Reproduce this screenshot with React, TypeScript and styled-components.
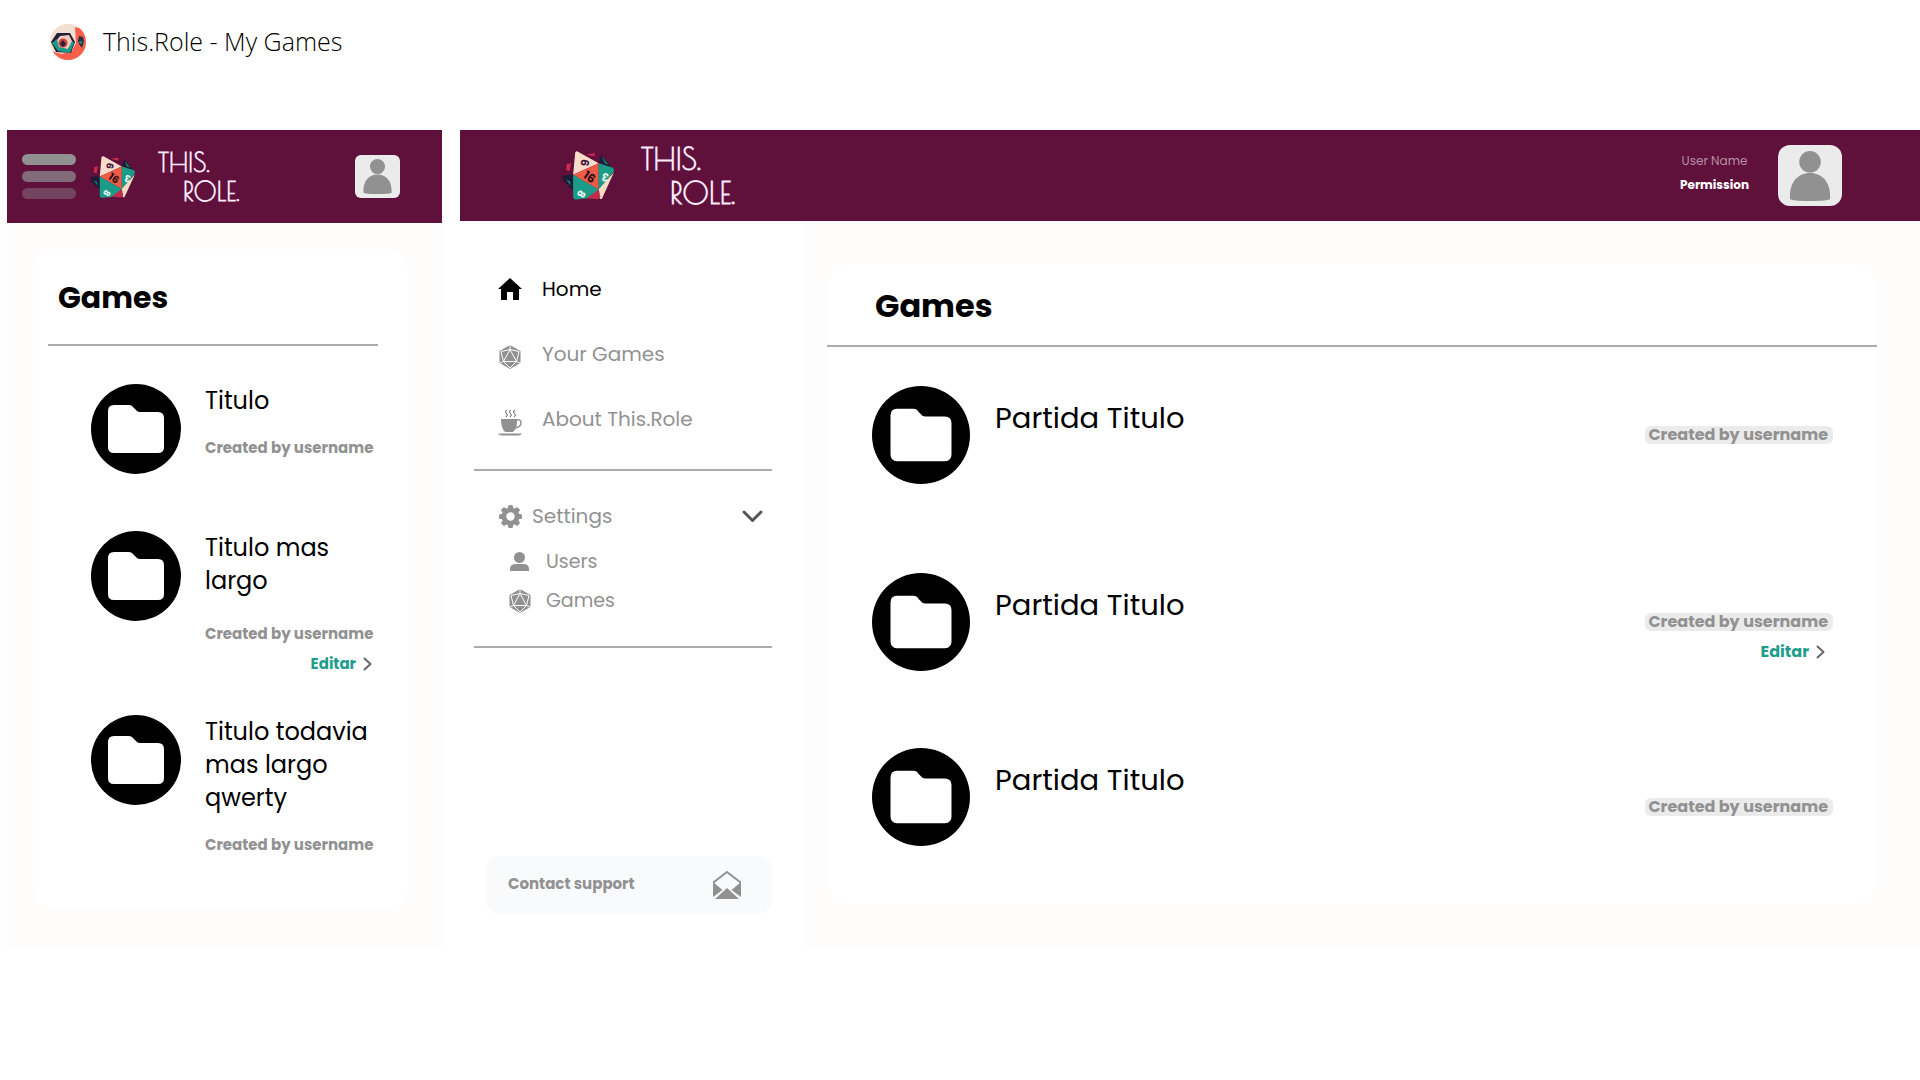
import React from "react";
import styled, { createGlobalStyle, css } from "styled-components";

const ink = "#000000";
const grey = "#919191";
const wine = "#5f113c";
const teal = "#1f9d8b";

const Global = createGlobalStyle`
  *, *::before, *::after { box-sizing: border-box; }
  body { margin: 0; background: #fff; color: ${ink}; font-family: Poppins, Inter, "Noto Sans", sans-serif; }
  h1, h2, h3, p, ul { margin: 0; padding: 0; }
  ul { list-style: none; }
  a { color: inherit; text-decoration: none; }
  button { border: 0; padding: 0; background: none; color: inherit; font: inherit; cursor: pointer; }
  svg { display: block; flex: none; }
`;

/* ---------- layout ---------- */

const TitleBar = styled.header`
  display: flex;
  align-items: flex-start;
  gap: 17px;
  height: 130px;
  padding: 24px 50px 0;
`;

const PageTitle = styled.h1`
  font: 300 25px/34px "Open Sans", "Noto Sans", sans-serif;
`;

const Boards = styled.main`
  display: flex;
  gap: 18px;
  padding-left: 7px;
`;

const Phone = styled.section`
  flex: 0 0 435px;
  min-width: 0;
  display: flex;
  flex-direction: column;
  background: #fffdfc;
`;

const Desktop = styled.section`
  flex: 1;
  min-width: 0;
  display: flex;
  flex-direction: column;
`;

const TopBar = styled.div<{ $wide?: boolean }>`
  display: flex;
  align-items: center;
  color: #fff;
  background: ${wine};
  ${(p) =>
    p.$wide
      ? css`height: 91px; padding: 0 78px 0 101px;`
      : css`height: 93px; padding: 0 42px 0 15px;`}
`;

const MenuButton = styled.button`
  display: grid;
  gap: 6px;
  width: 54px;
  margin-right: 13px;
`;

const Bar = styled.span<{ $fade: number }>`
  height: 11px;
  border-radius: 6px;
  background: ${grey};
  opacity: ${(p) => p.$fade};
`;

const Brand = styled.a<{ $wide?: boolean }>`
  display: flex;
  align-items: center;
  gap: ${(p) => (p.$wide ? 25 : 21)}px;
  margin-right: auto;
  color: #fbe9fb;
  font-family: "Poiret One", "Josefin Sans", Lato, sans-serif;
  font-weight: 700;
  font-size: ${(p) => (p.$wide ? 30 : 26)}px;
  line-height: ${(p) => (p.$wide ? 34 : 29)}px;
`;

const BrandWords = styled.span`
  display: grid;
`;

const BrandSecond = styled.span<{ $wide?: boolean }>`
  padding-left: ${(p) => (p.$wide ? 29 : 25)}px;
`;

const Account = styled.div`
  display: grid;
  gap: 4px;
  margin-right: 29px;
  padding-bottom: 6px;
  text-align: center;
  font-size: 12px;
  line-height: 20px;
`;

const UserName = styled.span`
  color: #b78fa6;
`;

const Permission = styled.strong`
  font-weight: 700;
`;

const Avatar = styled.button<{ $wide?: boolean }>`
  display: grid;
  place-items: center;
  background: #ebebeb;
  ${(p) =>
    p.$wide
      ? css`width: 64px; height: 61px; border-radius: 12px;`
      : css`width: 45px; height: 43px; border-radius: 6px;`}
`;

const Columns = styled.div`
  flex: 1;
  display: flex;
`;

const Sidebar = styled.aside`
  flex: 0 0 342px;
  display: flex;
  flex-direction: column;
  padding: 50px 30px 36px 14px;
`;

const Content = styled.div`
  flex: 1;
  min-width: 0;
  padding: 43px 43px 45px 25px;
  background: #fffdfc;
`;

const PhoneContent = styled.div`
  padding: 26px 34px 40px 26px;
`;

/* ---------- sidebar ---------- */

const Divider = styled.hr`
  width: 100%;
  height: 2px;
  margin: 0;
  border: 0;
  background: #ababab;
`;

const NavList = styled.ul`
  display: grid;
  gap: 29px;
  padding: 0 0 32px 24px;
`;

const NavLink = styled.a<{ $active?: boolean }>`
  display: grid;
  grid-template-columns: 24px 1fr;
  align-items: center;
  gap: 20px;
  height: 36px;
  font-size: 20px;
  line-height: 24px;
  color: ${(p) => (p.$active ? ink : grey)};

  svg {
    justify-self: center;
    margin-top: ${(p) => (p.$active ? 0 : 6)}px;
  }
`;

const SettingsButton = styled.button`
  display: flex;
  align-items: center;
  gap: 10px;
  width: 100%;
  height: 36px;
  margin-top: 27px;
  padding: 0 9px 0 25px;
  color: ${grey};
  font-size: 20px;
  line-height: 24px;
`;

const SettingsLabel = styled.span`
  margin-right: auto;
`;

const SubList = styled.ul`
  padding: 8px 0 26px 35px;
`;

const SubLink = styled.a`
  display: grid;
  grid-template-columns: 22px 1fr;
  align-items: center;
  justify-items: start;
  gap: 15px;
  height: 39px;
  color: ${grey};
  font-size: 19px;
  line-height: 24px;
`;

const Support = styled.a`
  display: flex;
  align-items: center;
  justify-content: space-between;
  height: 58px;
  margin: auto 0 0 12px;
  padding: 0 31px 0 22px;
  border-radius: 14px;
  background: #f9fafc;
  color: ${grey};
  font-size: 15px;
  font-weight: 700;
`;

const SupportLabel = styled.span`
  padding-bottom: 4px;
`;

/* ---------- game cards ---------- */

const Card = styled.section<{ $wide?: boolean }>`
  background: #fff;
  border-radius: 24px;
  ${(p) =>
    p.$wide
      ? css`padding: 20px 0 58px;`
      : css`padding: 27px 30px 55px 15px;`}
`;

const CardTitle = styled.h2<{ $wide?: boolean }>`
  font-weight: 700;
  line-height: 44px;
  ${(p) =>
    p.$wide
      ? css`padding: 0 48px 17px; font-size: 32px;`
      : css`padding: 0 10px 24px; font-size: 30px;`}
`;

const PhoneList = styled.ul`
  display: grid;
  gap: 41px;
  padding: 38px 0 0 43px;
`;

const PhoneItem = styled.li`
  display: grid;
  grid-template-columns: 90px 1fr;
  align-items: start;
  gap: 24px;
  min-height: 106px;

  &:last-child { min-height: 0; }
`;

const PhoneName = styled.h3`
  font-size: 24px;
  font-weight: 400;
  line-height: 33px;
`;

const PhoneMeta = styled.div<{ $editable?: boolean }>`
  display: grid;
  gap: 10px;
  padding-top: ${(p) => (p.$editable ? 27 : 21)}px;
  color: ${grey};
  font-size: 15px;
  font-weight: 700;
  line-height: 20px;
  white-space: nowrap;
`;

const EditLink = styled.a`
  display: flex;
  align-items: center;
  justify-content: flex-end;
  gap: 7px;
  padding-right: 6px;
  color: ${teal};
  font-weight: 700;
  line-height: 20px;
`;

const WideList = styled.ul`
  display: grid;
  gap: 77px;
  padding: 39px 44px 0 45px;
`;

const WideMeta = styled.div`
  display: grid;
  align-content: start;
  gap: 11px;
  padding-top: 40px;
  font-size: 16px;
`;

const WideItem = styled.li`
  display: grid;
  grid-template-columns: 98px 1fr auto;
  gap: 25px;

  &:first-child { margin-bottom: 12px; }
  &:last-child ${WideMeta} { padding-top: 50px; }
`;

const WideName = styled.h3`
  padding-top: 12px;
  font-size: 29px;
  font-weight: 400;
  line-height: 40px;
`;

const Badge = styled.p`
  padding: 0 5px 0 3px;
  border-radius: 6px;
  background: #ebebeb;
  color: ${grey};
  font-weight: 700;
  line-height: 18px;
`;

const WideEdit = styled(EditLink)`
  padding-right: 8px;
`;

/* ---------- drawings ---------- */

const Dice = ({ width, height }: { width: number; height: number }) => (
  <svg width={width} height={height} viewBox="36 34 156 146" aria-hidden="true">
    <path d="M72 104 38 108 42 122 72 152zM144 70 151 47 183 86z" fill="#1d1b35" />
    <path d="M152 52 160 72 172 76zM50 118 62 124 62 136z" fill="#17786f" />
    <path d="M52 74 64 72 60 94 50 92zM108 46 132 43 132 52 118 50z" fill="#d0284f" />
    <path d="M187 98 152 174Q147 176 145 170L141 147z" fill="#f9dcc3" />
    <path d="M104 172 143 145 148 168 140 175z" fill="#c22c4c" />
    <path d="M70 105 76 41Q79 36 84 39L143 72z" fill="#fadcc8" />
    <path d="M143 72 70 105 143 147z" fill="#f15b45" />
    <path d="M143 72 182 84Q189 88 186 96L143 147z" fill="#1b9c88" />
    <path d="M70 105 143 147 108 173 78 176Q70 176 70 168z" fill="#1b9c88" />
    <g fontFamily="Poppins, Inter, sans-serif" fontWeight="700" textAnchor="middle">
      <text transform="translate(92 68) rotate(100)" fontSize="32" fill="#43163d">6</text>
      <text transform="translate(110 121) rotate(35)" fontSize="34" fill="#2b1018">16</text>
      <text transform="translate(165 101) rotate(195)" fontSize="32" fill="#e6f6ef">3</text>
      <text transform="translate(84 155) rotate(-240)" fontSize="30" fill="#e6f6ef">8</text>
    </g>
  </svg>
);

const SiteIcon = () => (
  <svg width="36" height="36" viewBox="0 0 36 36" aria-hidden="true">
    <clipPath id="round"><circle cx="18" cy="18" r="18" /></clipPath>
    <g clipPath="url(#round)">
      <path d="M0 0h36v36H0z" fill="#f3dfcf" />
      <path d="M25 3l11 3v30H0v-9l12 3 10-3 4-8z" fill="#f9604c" />
      <path d="M1 18 7 9l13 0 5 9-4 11-15-1z" fill="#21213a" />
      <path d="m10 12 9-1 4 8-5 6-9 0-5-5z" fill="#f5c9bd" />
      <path d="m2 19 5-4 2 8 9 2 4-8 2 2-4 10-12-2z" fill="#1b9c88" />
      <circle cx="13" cy="19" r="4.500" fill="#c5443f" />
      <path d="m10 20 3-4 3 4-3 3z" fill="#2a2034" />
      <path d="m29 12 4 1 1 4-2 7-3-4-1-3z" fill="#263042" />
      <path d="m28 18 5-1-2 3z" fill="#1b9c88" />
    </g>
  </svg>
);

const Person = ({ size }: { size: number }) => (
  <svg width={size} height={size} viewBox="0 0 51 51" fill={grey} aria-hidden="true">
    <circle cx="25.500" cy="11" r="11" />
    <path d="M5 46C5 32 13 22.500 25.500 22.500S46 32 46 46v3Q44 51 25.500 51T5 49z" />
  </svg>
);

const Folder = ({ size }: { size: number }) => (
  <svg width={size} height={size} viewBox="0 0 90 90" aria-hidden="true">
    <circle cx="45" cy="45" r="45" fill="#000" />
    <path d="M23 21h15q3 0 5 3l2 2q1 2 4 2h18q6 0 6 6v29q0 6-6 6H23q-6 0-6-6V27q0-6 6-6z" fill="#fff" />
  </svg>
);

const D20 = () => (
  <svg width="22" height="24" viewBox="0 0 22 24" aria-hidden="true">
    <path d="M11 0 21.500 6v12L11 24 .5 18V6z" fill={grey} />
    <path d="M11 4.500 4.500 16.500h13zM11 0v4.500L2 6.500 4.500 16.500 0 18.500M11 4.500l9 2-2.500 10 4.500 2M4.500 16.500 11 23l6.500-6.500" fill="none" stroke="#fff" strokeWidth="1" strokeLinejoin="round" />
  </svg>
);

const HomeIcon = () => (
  <svg width="24" height="22" viewBox="0 0 24 22" aria-hidden="true">
    <path d="M12 0 24 11h-3v11h-6v-8H9v8H3V11H0z" />
  </svg>
);

const Cup = () => (
  <svg width="24" height="27" viewBox="0 0 24 27" aria-hidden="true">
    <path d="M8.500 1q-2 2 0 3.500T8 8M12.500 1q-2 2 0 3.500T12 8M16.500 1q-2 2 0 3.500T16 8" fill="none" stroke="#555" strokeWidth="1" />
    <path d="M3 10h16v3q0 7-4 10H7q-4-4-4-13zM0 24.500h24q-1 2-4 2H4q-3 0-4-2z" fill={grey} />
    <path d="M19 11q4-1 4 3t-6 5" fill="none" stroke={grey} strokeWidth="1.500" />
  </svg>
);

const Gear = () => (
  <svg width="23" height="23" viewBox="0 0 23 23" aria-hidden="true">
    <g fill={grey}>
      {[0, 45, 90, 135].map((a) => (
        <rect key={a} x="9" y="0" width="5" height="23" rx="1.500" transform={`rotate(${a} 11.5 11.5)`} />
      ))}
      <circle cx="11.500" cy="11.500" r="9" />
    </g>
    <circle cx="11.500" cy="11.500" r="4.200" fill="#fff" />
  </svg>
);

const UserIcon = () => (
  <svg width="21" height="19" viewBox="0 0 21 19" fill={grey} aria-hidden="true">
    <circle cx="10.500" cy="5.500" r="5.500" />
    <path d="M1 19v-2q0-5 6-5h7q6 0 6 5v2z" />
  </svg>
);

const ChevronDown = () => (
  <svg width="21" height="13" viewBox="0 0 21 13" fill="none" stroke="#555" strokeWidth="3" strokeLinecap="round" strokeLinejoin="round" aria-hidden="true">
    <path d="m2 2 8.500 8.500L19 2" />
  </svg>
);

const ChevronRight = () => (
  <svg width="9" height="14" viewBox="0 0 9 14" fill="none" stroke="#666" strokeWidth="2" strokeLinecap="round" strokeLinejoin="round" aria-hidden="true">
    <path d="m1.500 1.500 6 5.500-6 5.500" />
  </svg>
);

const Envelope = () => (
  <svg width="28" height="28" viewBox="0 0 28 28" aria-hidden="true">
    <path d="M1 12v-1L14 1l13 10v1" fill="none" stroke={grey} strokeWidth="2" strokeLinejoin="round" />
    <path d="M0 11 9.500 19 0 26zM28 11l-9.500 8 9.500 7zM14 17l12 11H2z" fill={grey} />
  </svg>
);

/* ---------- data and page ---------- */

const phoneGames = [
  { name: "Titulo" },
  { name: "Titulo mas largo", editable: true },
  { name: "Titulo todavia mas largo qwerty" },
];

const wideGames = [
  { name: "Partida Titulo" },
  { name: "Partida Titulo", editable: true },
  { name: "Partida Titulo" },
];

const Logo = ({ wide }: { wide?: boolean }) => (
  <Brand href="#" $wide={wide}>
    <Dice width={wide ? 55 : 48} height={wide ? 51 : 44} />
    <BrandWords>
      <span>THIS.</span>
      <BrandSecond $wide={wide}>ROLE.</BrandSecond>
    </BrandWords>
  </Brand>
);

export default function App() {
  return (
    <>
      <Global />
      <TitleBar>
        <SiteIcon />
        <PageTitle>This.Role - My Games</PageTitle>
      </TitleBar>
      <Boards>
        <Phone>
          <TopBar>
            <MenuButton aria-label="Menu">
              <Bar $fade={1} />
              <Bar $fade={0.7} />
              <Bar $fade={0.4} />
            </MenuButton>
            <Logo />
            <Avatar aria-label="Account"><Person size={35} /></Avatar>
          </TopBar>
          <PhoneContent>
            <Card>
              <CardTitle>Games</CardTitle>
              <Divider />
              <PhoneList>
                {phoneGames.map((game) => (
                  <PhoneItem key={game.name}>
                    <Folder size={90} />
                    <div>
                      <PhoneName>{game.name}</PhoneName>
                      <PhoneMeta $editable={game.editable}>
                        <p>Created by username</p>
                        {game.editable && <EditLink href="#">Editar <ChevronRight /></EditLink>}
                      </PhoneMeta>
                    </div>
                  </PhoneItem>
                ))}
              </PhoneList>
            </Card>
          </PhoneContent>
        </Phone>

        <Desktop>
          <TopBar $wide>
            <Logo wide />
            <Account>
              <UserName>User Name</UserName>
              <Permission>Permission</Permission>
            </Account>
            <Avatar $wide aria-label="Account"><Person size={50} /></Avatar>
          </TopBar>
          <Columns>
            <Sidebar>
              <nav>
                <NavList>
                  <li><NavLink href="#" $active><HomeIcon />Home</NavLink></li>
                  <li><NavLink href="#"><D20 />Your Games</NavLink></li>
                  <li><NavLink href="#"><Cup />About This.Role</NavLink></li>
                </NavList>
                <Divider />
                <SettingsButton aria-expanded="true">
                  <Gear />
                  <SettingsLabel>Settings</SettingsLabel>
                  <ChevronDown />
                </SettingsButton>
                <SubList>
                  <li><SubLink href="#"><UserIcon />Users</SubLink></li>
                  <li><SubLink href="#"><D20 />Games</SubLink></li>
                </SubList>
                <Divider />
              </nav>
              <Support href="#"><SupportLabel>Contact support</SupportLabel><Envelope /></Support>
            </Sidebar>
            <Content>
              <Card $wide>
                <CardTitle $wide>Games</CardTitle>
                <Divider />
                <WideList>
                  {wideGames.map((game, i) => (
                    <WideItem key={i}>
                      <Folder size={98} />
                      <WideName>{game.name}</WideName>
                      <WideMeta>
                        <Badge>Created by username</Badge>
                        {game.editable && <WideEdit href="#">Editar <ChevronRight /></WideEdit>}
                      </WideMeta>
                    </WideItem>
                  ))}
                </WideList>
              </Card>
            </Content>
          </Columns>
        </Desktop>
      </Boards>
    </>
  );
}
